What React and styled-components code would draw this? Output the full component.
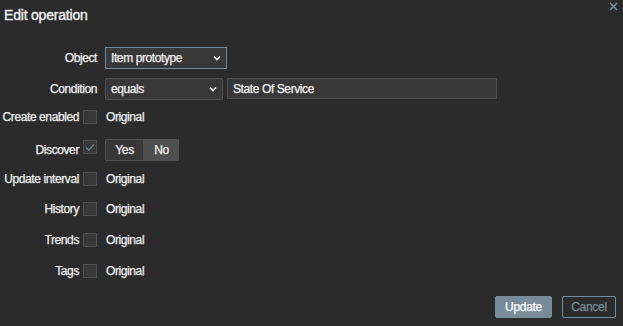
import React from "react";
import styled, { createGlobalStyle } from "styled-components";

const Global = createGlobalStyle`
  html, body { margin: 0; padding: 0; background: #2b2b2b; }
  body {
    font-family: "Liberation Sans", Arial, sans-serif;
    font-size: 12px;
    color: #f2f2f2;
    -webkit-text-stroke: 0.25px currentColor;
  }
`;

const Dialog = styled.div`
  position: relative;
  width: 623px;
  height: 326px;
  box-sizing: border-box;
  background: #2b2b2b;
  display: flex;
  flex-direction: column;
`;

const Title = styled.h4`
  margin: 0;
  padding: 7px 0 0 4px;
  font-size: 14px;
  line-height: 17px;
  font-weight: normal;
  color: #f2f2f2;
  letter-spacing: -0.2px;
  -webkit-text-stroke: 0.35px currentColor;
`;

const CloseBtn = styled.button`
  position: absolute;
  top: 1px;
  right: 5px;
  width: 10px;
  height: 10px;
  padding: 0;
  border: 0;
  background: none;
  display: flex;
  align-items: center;
  justify-content: center;
`;

const Form = styled.div`
  display: flex;
  flex-direction: column;
  gap: 8.7px;
  padding-top: 23px;
`;

const Row = styled.div`
  display: grid;
  grid-template-columns: 97px auto;
  column-gap: 8px;
  height: 22px;
  align-items: start;
`;

const Label = styled.div`
  display: flex;
  justify-content: flex-end;
  align-items: center;
  gap: 4px;
  padding-top: ${(p) => (p.$check ? "2px" : "0")};
  height: ${(p) => (p.$check ? "14px" : "22px")};
  letter-spacing: -0.4px;
  white-space: nowrap;
`;

const Field = styled.div`
  display: flex;
  align-items: center;
  gap: 4px;
  padding-top: ${(p) => (p.$check ? "2px" : "0")};
  height: ${(p) => (p.$check ? "14px" : "22px")};
`;

const Select = styled.div`
  box-sizing: border-box;
  width: ${(p) => p.$w}px;
  height: 22px;
  padding: 0 5px;
  display: flex;
  align-items: center;
  justify-content: space-between;
  background: #383838;
  border: 1px solid ${(p) => (p.$focus ? "#768d99" : "#4f4f4f")};
  letter-spacing: -0.4px;
`;

const TextInput = styled.div`
  box-sizing: border-box;
  width: 270px;
  height: 21px;
  padding: 0 5px;
  display: flex;
  align-items: center;
  background: #383838;
  border: 1px solid #4f4f4f;
  letter-spacing: -0.4px;
`;

const Check = styled.span`
  box-sizing: border-box;
  width: 14px;
  height: 14px;
  flex: none;
  align-self: ${(p) => (p.$top ? "flex-start" : "center")};
  margin-top: ${(p) => (p.$top ? "1px" : "0")};
  background: #383838;
  border: 1px solid #4f4f4f;
  display: flex;
  align-items: center;
  justify-content: center;
`;

const Plain = styled.span`
  padding-left: 1px;
  letter-spacing: -0.4px;
`;

const Segmented = styled.div`
  display: flex;
  height: 22px;
`;

const Segment = styled.div`
  box-sizing: border-box;
  width: ${(p) => p.$w}px;
  height: 22px;
  display: flex;
  align-items: center;
  justify-content: center;
  background: ${(p) => (p.$on ? "#4f4f4f" : "#383838")};
  border: 1px solid #4f4f4f;
  letter-spacing: -0.3px;
`;

const Footer = styled.div`
  margin-top: auto;
  display: flex;
  justify-content: flex-end;
  gap: 10px;
  padding: 0 7px 8px 0;
`;

const Button = styled.button`
  box-sizing: border-box;
  height: 22px;
  width: ${(p) => p.$w}px;
  border-radius: 2px;
  border: 1px solid #768d99;
  background: ${(p) => (p.$primary ? "#768d99" : "transparent")};
  color: ${(p) => (p.$primary ? "#ffffff" : "#768d99")};
  font-family: "Liberation Sans", Arial, sans-serif;
  font-size: 12px;
  letter-spacing: -0.3px;
  -webkit-text-stroke: 0.25px currentColor;
  padding: 0;
`;

const ChevronIcon = () => (
  <svg width="8" height="6" viewBox="0 0 8 6">
    <path d="M1 1.5 L4 4.5 L7 1.5" fill="none" stroke="#f2f2f2" strokeWidth="1.6" />
  </svg>
);

const CheckMark = () => (
  <svg width="10" height="9" viewBox="0 0 10 9">
    <path d="M1 4.5 L3.8 7.2 L9 1.5" fill="none" stroke="#768d99" strokeWidth="1.2" />
  </svg>
);

const CheckRow = ({ label }) => (
  <Row>
    <Label $check>
      {label}
      <Check />
    </Label>
    <Field $check>
      <Plain>Original</Plain>
    </Field>
  </Row>
);

export default function App() {
  return (
    <>
      <Global />
      <Dialog>
        <Title>Edit operation</Title>
        <CloseBtn aria-label="Close">
          <svg width="9" height="9" viewBox="0 0 9 9">
            <path d="M1 1 L8 8 M8 1 L1 8" stroke="#768d99" strokeWidth="1.6" />
          </svg>
        </CloseBtn>
        <Form>
          <Row>
            <Label>Object</Label>
            <Field>
              <Select $w={122} $focus>
                <span>Item prototype</span>
                <ChevronIcon />
              </Select>
            </Field>
          </Row>
          <Row>
            <Label>Condition</Label>
            <Field>
              <Select $w={118}>
                <span>equals</span>
                <ChevronIcon />
              </Select>
              <TextInput>State Of Service</TextInput>
            </Field>
          </Row>
          <CheckRow label="Create enabled" />
          <Row>
            <Label>
              Discover
              <Check $top>
                <CheckMark />
              </Check>
            </Label>
            <Field>
              <Segmented>
                <Segment $w={39}>Yes</Segment>
                <Segment $w={35} $on>No</Segment>
              </Segmented>
            </Field>
          </Row>
          <CheckRow label="Update interval" />
          <CheckRow label="History" />
          <CheckRow label="Trends" />
          <CheckRow label="Tags" />
        </Form>
        <Footer>
          <Button $primary $w={57}>Update</Button>
          <Button $w={54}>Cancel</Button>
        </Footer>
      </Dialog>
    </>
  );
}
